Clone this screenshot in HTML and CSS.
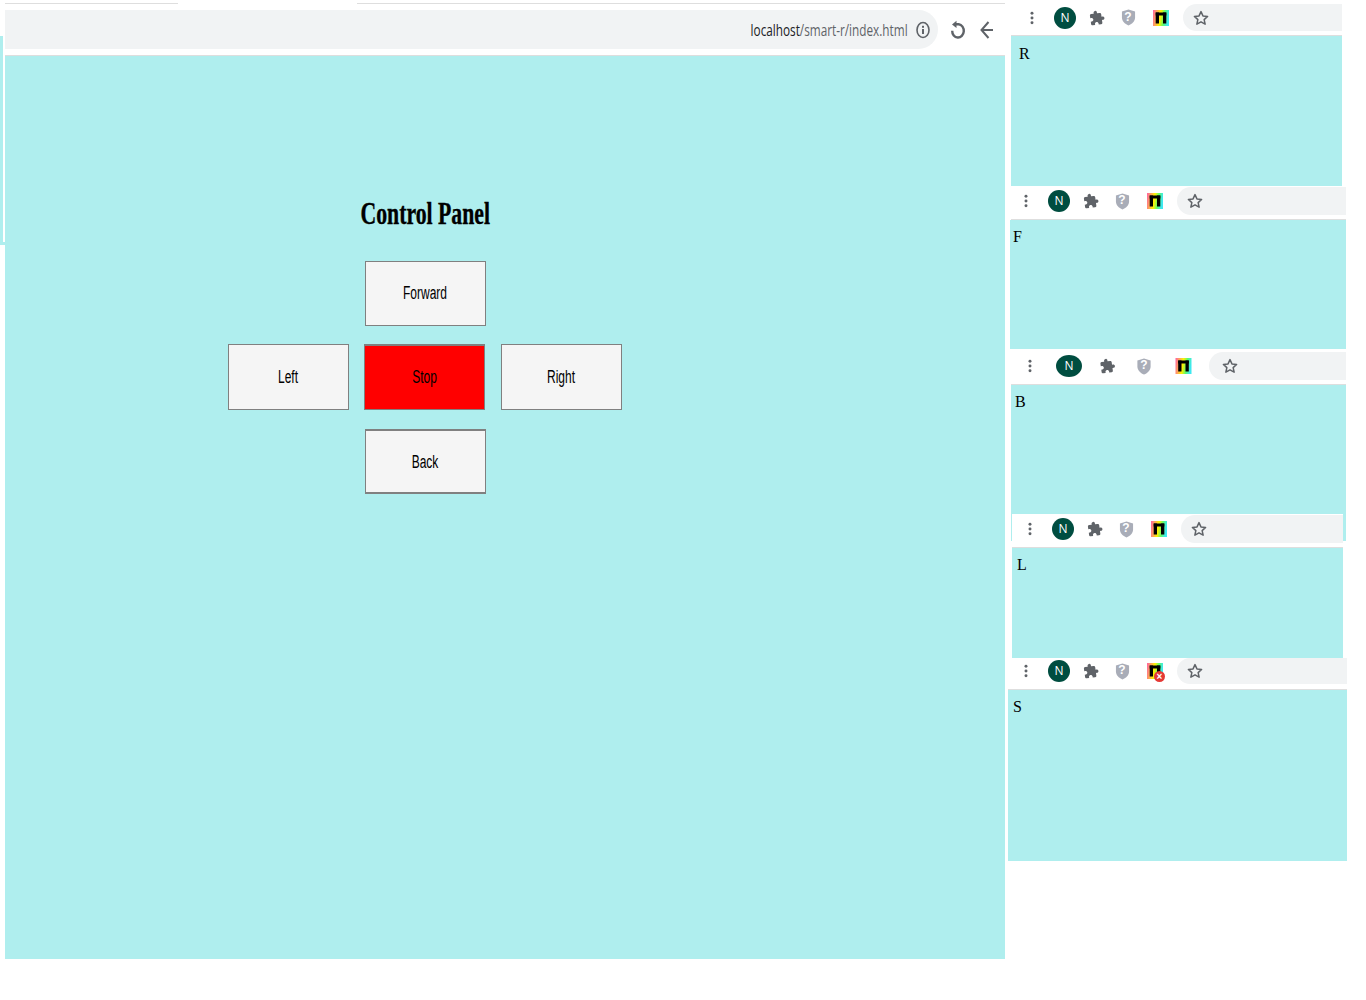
FILE: index.html
```html
<!DOCTYPE html>
<html lang="en">
<head>
<meta charset="utf-8">
<title>Control Panel</title>
<link rel="stylesheet" href="styles.css">
</head>
<body>
<svg class="defs" aria-hidden="true">
  <defs>
    <linearGradient id="rainbow" x1="0" y1="0" x2="1" y2="0.15">
      <stop offset="0" stop-color="#ff5fa8"/>
      <stop offset="0.3" stop-color="#ffb347"/>
      <stop offset="0.5" stop-color="#fff200"/>
      <stop offset="0.75" stop-color="#5dfb6c"/>
      <stop offset="1" stop-color="#3ee8f0"/>
    </linearGradient>
    <symbol id="kebab" viewBox="0 0 4 16"><circle cx="2" cy="2.5" r="1.7"/><circle cx="2" cy="8" r="1.7"/><circle cx="2" cy="13.5" r="1.7"/></symbol>
    <symbol id="puzzle" viewBox="0 0 24 24"><path d="M20.5 11H19V7c0-1.1-.9-2-2-2h-4V3.5C13 2.12 11.88 1 10.5 1S8 2.12 8 3.5V5H4c-1.1 0-1.99.9-1.99 2v3.8H3.5c1.49 0 2.7 1.21 2.7 2.7s-1.21 2.7-2.7 2.7H2V20c0 1.1.9 2 2 2h3.8v-1.5c0-1.49 1.21-2.7 2.7-2.7 1.49 0 2.7 1.21 2.7 2.7V22H17c1.1 0 2-.9 2-2v-4h1.5c1.38 0 2.5-1.12 2.5-2.5S21.88 11 20.5 11z"/></symbol>
    <symbol id="shield" viewBox="0 0 16 18"><path d="M8 .5 15 2.6V9c0 4-3 6.8-7 8.5C4 15.800 1 13 1 9V2.600z"/></symbol>
    <symbol id="star" viewBox="0 0 24 24"><path d="M12 3.500l2.600 5.700 6.200.7-4.600 4.200 1.300 6.100L12 17.100l-5.500 3.100 1.300-6.100-4.600-4.200 6.200-.7z" fill="none" stroke="currentColor" stroke-width="2" stroke-linejoin="round"/></symbol>
    <symbol id="badge" viewBox="0 0 16 16">
      <rect width="16" height="16" fill="url(#rainbow)"/>
      <rect x="2.700" y="2.500" width="10.600" height="3" fill="#000"/>
      <rect x="2.700" y="2.500" width="3.300" height="11" fill="#000"/>
      <rect x="10" y="2.500" width="3.300" height="11" fill="#000"/>
    </symbol>
  </defs>
</svg>

<section class="sliver"></section>

<section class="main-window">
  <div class="tabline">
    <span class="tabline-left"></span>
    <span class="tabline-right"></span>
  </div>
  <div class="addressbar">
    <div class="omnibox">
      <span class="url"><span class="url-host">localhost</span>/smart-r/index.html</span>
      <svg class="info-icon" viewBox="0 0 16 18"><ellipse cx="8" cy="9" rx="6" ry="7.500" fill="none" stroke="#5f6368" stroke-width="1.600"/><rect x="7" y="8" width="2" height="5" fill="#5f6368"/><rect x="7" y="4.800" width="2" height="2" fill="#5f6368"/></svg>
    </div>
    <svg class="reload-icon" viewBox="0 0 16 20"><path d="M5.500 4.200h3.200a5.800 6.700 0 1 1-6.500 6.500" fill="none" stroke="#5f6368" stroke-width="2.400"/><path d="M2 4.400 6.500.8v7.200z" fill="#5f6368"/></svg>
    <svg class="back-icon" viewBox="0 0 14 20"><path d="M13 10H2.500M8.500 2 1.500 10l7 8" fill="none" stroke="#5f6368" stroke-width="2"/></svg>
  </div>
  <div class="pane main-pane">
    <div class="control">
      <h1 class="control-title"><span class="squeeze-title">Control Panel</span></h1>
      <div class="btn-row btn-row-top"><button class="btn btn-shift"><span class="squeeze">Forward</span></button></div>
      <div class="btn-row btn-row-mid">
        <button class="btn btn-tall"><span class="squeeze">Left</span></button>
        <button class="btn btn-tall btn-stop"><span class="squeeze">Stop</span></button>
        <button class="btn btn-tall btn-right"><span class="squeeze">Right</span></button>
      </div>
      <div class="btn-row btn-row-bottom"><button class="btn btn-shift btn-thick"><span class="squeeze">Back</span></button></div>
    </div>
  </div>
</section>

<section class="shot shot-r">
  <div class="toolbar">
    <span class="slot slot-kebab"><svg class="i-kebab"><use href="#kebab"/></svg></span>
    <span class="slot slot-avatar"><span class="avatar">N</span></span>
    <span class="slot"><svg class="i-puzzle"><use href="#puzzle"/></svg></span>
    <span class="slot slot-shield"><svg class="i-shield"><use href="#shield"/></svg><span class="shield-q">?</span></span>
    <span class="slot"><svg class="i-badge"><use href="#badge"/></svg></span>
    <span class="pill"><svg class="i-star"><use href="#star"/></svg></span>
  </div>
  <div class="pane letter-pane">R</div>
</section>

<section class="shot shot-f">
  <div class="toolbar">
    <span class="slot slot-kebab"><svg class="i-kebab"><use href="#kebab"/></svg></span>
    <span class="slot slot-avatar"><span class="avatar">N</span></span>
    <span class="slot"><svg class="i-puzzle"><use href="#puzzle"/></svg></span>
    <span class="slot slot-shield"><svg class="i-shield"><use href="#shield"/></svg><span class="shield-q">?</span></span>
    <span class="slot"><svg class="i-badge"><use href="#badge"/></svg></span>
    <span class="pill"><svg class="i-star"><use href="#star"/></svg></span>
  </div>
  <div class="pane letter-pane">F</div>
</section>

<section class="shot shot-b">
  <div class="toolbar">
    <span class="slot slot-kebab"><svg class="i-kebab"><use href="#kebab"/></svg></span>
    <span class="slot slot-avatar"><span class="avatar">N</span></span>
    <span class="slot"><svg class="i-puzzle" preserveAspectRatio="none"><use href="#puzzle"/></svg></span>
    <span class="slot slot-shield"><svg class="i-shield"><use href="#shield"/></svg><span class="shield-q">?</span></span>
    <span class="slot"><svg class="i-badge"><use href="#badge"/></svg></span>
    <span class="pill"><svg class="i-star"><use href="#star"/></svg></span>
  </div>
  <div class="pane letter-pane">B</div>
</section>

<section class="shot shot-l">
  <div class="toolbar">
    <span class="slot slot-kebab"><svg class="i-kebab"><use href="#kebab"/></svg></span>
    <span class="slot slot-avatar"><span class="avatar">N</span></span>
    <span class="slot"><svg class="i-puzzle"><use href="#puzzle"/></svg></span>
    <span class="slot slot-shield"><svg class="i-shield"><use href="#shield"/></svg><span class="shield-q">?</span></span>
    <span class="slot"><svg class="i-badge"><use href="#badge"/></svg></span>
    <span class="pill"><svg class="i-star"><use href="#star"/></svg></span>
  </div>
  <div class="pane letter-pane">L</div>
</section>

<section class="shot shot-s">
  <div class="toolbar">
    <span class="slot slot-kebab"><svg class="i-kebab"><use href="#kebab"/></svg></span>
    <span class="slot slot-avatar"><span class="avatar">N</span></span>
    <span class="slot"><svg class="i-puzzle"><use href="#puzzle"/></svg></span>
    <span class="slot slot-shield"><svg class="i-shield"><use href="#shield"/></svg><span class="shield-q">?</span></span>
    <span class="slot slot-badge-error"><svg class="i-badge"><use href="#badge"/></svg><span class="error-dot">×</span></span>
    <span class="pill"><svg class="i-star"><use href="#star"/></svg></span>
  </div>
  <div class="pane letter-pane">S</div>
</section>
</body>
</html>
```

FILE: styles.css
```css
* { box-sizing: border-box; }

html, body {
  margin: 0;
  height: 1000px;
  overflow: hidden;
  background: #fff;
  font-family: "Liberation Serif", "Times New Roman", serif;
  color: #000;
}

body { position: relative; }

.defs { position: absolute; width: 0; height: 0; }

.pane { background: #afeeee; }

/* Collage: each cropped screenshot is a window on a free canvas */
.sliver {
  position: absolute;
  left: 0;
  top: 36px;
  width: 5px;
  height: 209px;
  background: linear-gradient(to right, #afeeee 3px, #fff 3px);
  border-bottom: 3px solid #afeeee;
}

.main-window {
  position: absolute;
  left: 5px;
  top: 3px;
  width: 1000px;
  display: flex;
  flex-direction: column;
}

.tabline {
  display: flex;
  justify-content: space-between;
  height: 1px;
}
.tabline-left { width: 173px; background: #dedede; }
.tabline-right { width: 648px; background: #dedede; }

.addressbar {
  margin-top: 6px;
  height: 46px;
  display: flex;
  align-items: flex-start;
  border-bottom: 1px solid #dedede;
}

.omnibox {
  width: 933px;
  height: 39px;
  background: #f1f3f4;
  border-radius: 0 20px 20px 0;
  display: flex;
  align-items: center;
  justify-content: flex-end;
  padding-right: 7px;
}

.url {
  display: inline-block;
  font: 16px/20px "Open Sans", sans-serif;
  color: #5f6368;
  white-space: nowrap;
  transform: scaleX(0.735);
  transform-origin: right center;
  margin-right: 7px;
}
.url-host { color: #202124; }

.info-icon { width: 16px; height: 18px; }
.reload-icon { width: 16px; height: 20px; margin: 10px 0 0 12px; }
.back-icon { width: 14px; height: 20px; margin: 10px 0 0 14px; }

.main-pane { height: 903px; }

.control {
  width: 394px;
  margin-left: 223px;
  padding-top: 139px;
  display: flex;
  flex-direction: column;
  align-items: center;
}

.control-title {
  margin: 0 0 30px;
  font-size: 32px;
  line-height: 36px;
  font-weight: 700;
  text-align: center;
}
.squeeze-title {
  display: inline-block;
  transform: scale(0.68, 1);
  white-space: nowrap;
  -webkit-text-stroke: 0.4px #000;
}

.btn-row { display: flex; width: 100%; justify-content: center; }
.btn-row-mid { justify-content: flex-start; gap: 15px; margin: 18px 0 19px; }

.btn {
  width: 121px;
  height: 65px;
  padding: 0;
  background: #f5f5f5;
  border: 1px solid #808080;
  font: 18px "Liberation Sans", Arial, sans-serif;
  color: #000;
}
.btn-tall { height: 66px; }
.btn-shift { margin-left: 1px; }
.btn-right { margin-left: 1px; }
.btn-stop { background: #f00; border-width: 2px 1px 1px; }
.btn-thick { border-bottom-width: 2px; border-top-width: 2px; padding-top: 2px; }

.squeeze {
  display: inline-block;
  transform: scaleX(0.667);
  white-space: nowrap;
}

.shot {
  position: absolute;
  display: flex;
  flex-direction: column;
}

.toolbar {
  background: #fff;
  border-bottom: 1px solid #dedede;
  display: flex;
  align-items: center;
  flex-shrink: 0;
  color: #5f6368;
}

.slot {
  position: relative;
  width: 32px;
  height: 24px;
  display: flex;
  align-items: center;
  justify-content: center;
  flex-shrink: 0;
}
.slot-kebab { width: 17px; margin-right: 9px; justify-content: flex-end; }
.slot-shield { left: -1px; }

.i-kebab { width: 4px; height: 14px; fill: #5f6368; margin-right: 6px; }
.i-puzzle { width: 16px; height: 16px; fill: #5f6368; transform: rotate(-8deg); }
.i-shield { width: 15px; height: 17px; fill: #a9adb8; }
.i-badge { width: 16px; height: 16px; }
.i-star { width: 18px; height: 18px; color: #5f6368; }

.avatar {
  width: 22px;
  height: 22px;
  border-radius: 50%;
  background: #004d40;
  color: #fff;
  font: 12px/22px "Open Sans", sans-serif;
  text-align: center;
}

.shield-q {
  position: absolute;
  left: 0;
  right: 0;
  top: 3px;
  text-align: center;
  font: 700 12px/16px "Liberation Sans", sans-serif;
  color: #fff;
}

.slot-badge-error { overflow: visible; }
.error-dot {
  position: absolute;
  left: 15px;
  top: 12px;
  width: 11px;
  height: 11px;
  border-radius: 50%;
  background: #e53935;
  color: #fff;
  font: 700 10px/11px "Liberation Sans", sans-serif;
  text-align: center;
}

.pill {
  flex: 1;
  align-self: stretch;
  background: #f1f3f4;
  border-radius: 14px 0 0 14px;
  display: flex;
  align-items: center;
  padding-left: 9px;
  margin-left: 6px;
}

.letter-pane {
  font-size: 16px;
  line-height: 18px;
  padding-top: 8px;
  flex: 1;
}

.shot-r { left: 1011px; top: 0; width: 331px; height: 186px; }
.shot-r .toolbar { height: 36px; padding: 4px 0 4px 12px; }
.shot-r .letter-pane { padding-left: 8px; padding-top: 9px; }

.shot-f { left: 1011px; top: 186px; width: 335px; height: 163px; }
.shot-f .toolbar { height: 34px; padding: 1px 0 4px 6px; }
.shot-f .letter-pane { margin-left: -1px; padding-left: 3px; }

.shot-b { left: 1011px; top: 349px; width: 335px; height: 192px; }
.shot-b .toolbar { height: 36px; padding: 3px 0 4px 10px; }
.shot-b .slot { width: 38px; }
.shot-b .slot-kebab { width: 17px; margin-right: 12px; }
.shot-b .avatar { width: 26px; }
.shot-b .i-puzzle { width: 19px; }
.shot-b .i-shield { width: 18px; }
.shot-b .i-badge { width: 19px; height: 16px; }
.shot-b .pill { margin-left: 7px; padding-left: 12px; }
.shot-b .letter-pane { padding-left: 4px; }

.shot-l { left: 1012px; top: 514px; width: 331px; height: 144px; }
.shot-l .toolbar { height: 34px; padding: 1px 0 4px 9px; }
.shot-l .letter-pane { padding-left: 5px; }

.shot-s { left: 1008px; top: 658px; width: 339px; height: 203px; }
.shot-s .toolbar { height: 32px; padding: 0 0 5px 9px; }
.shot-s .letter-pane { padding-left: 5px; }
```
